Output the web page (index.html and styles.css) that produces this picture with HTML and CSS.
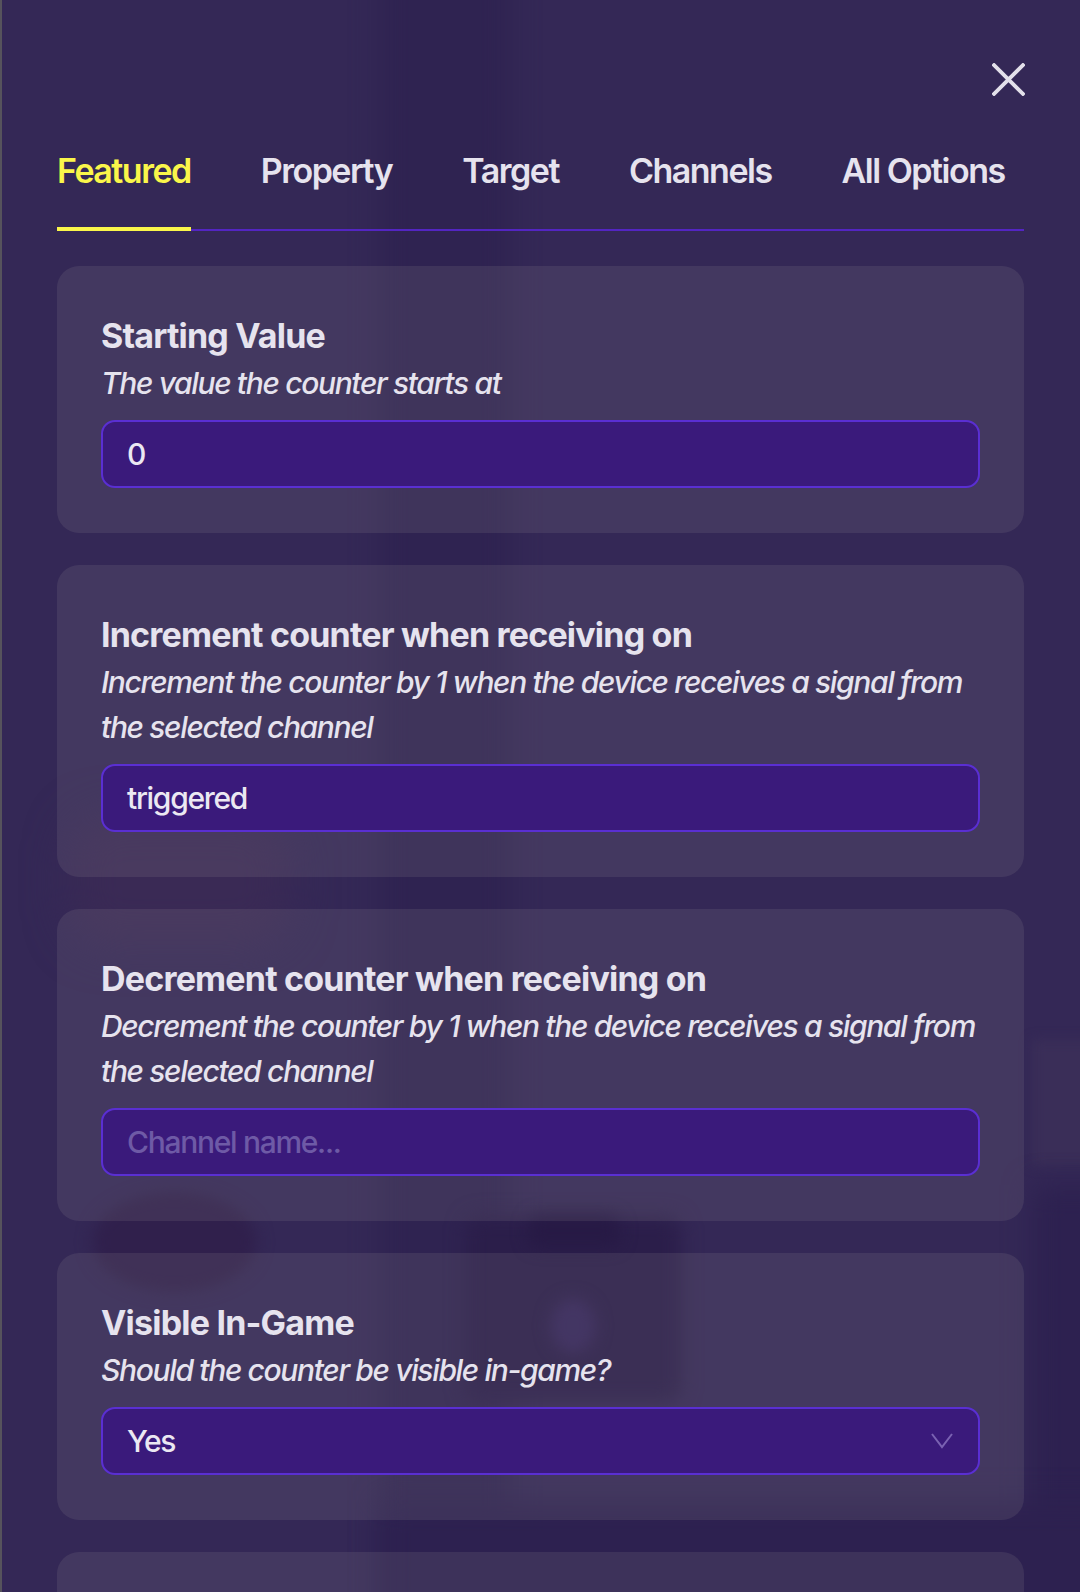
FILE: index.html
```html
<!DOCTYPE html>
<html lang="en">
<head>
<meta charset="utf-8">
<title>Counter – Options</title>
<link rel="stylesheet" href="styles.css">
</head>
<body>
<div class="backdrop" aria-hidden="true">
  <div class="blob strip"></div>
  <div class="blob pink"></div>
  <div class="blob disc"></div>
  <div class="blob box"></div>
  <div class="blob box-top"></div>
  <div class="blob box-oval"></div>
  <div class="blob right-light"></div>
  <div class="blob right-dark"></div>
  <div class="blob bottom-dark"></div>
</div>
<main class="panel">
  <header class="panel-head">
    <button class="close" aria-label="Close">
      <svg viewBox="0 0 32 32" width="33" height="33"><path d="M2 2 L30 30 M30 2 L2 30" stroke="currentColor" stroke-width="3.6" stroke-linecap="square" fill="none"/></svg>
    </button>
  </header>
  <nav class="tabs">
    <a class="tab active">Featured</a>
    <a class="tab">Property</a>
    <a class="tab">Target</a>
    <a class="tab">Channels</a>
    <a class="tab">All Options</a>
  </nav>
  <section class="options">
    <div class="card">
      <h3 class="card-title">Starting Value</h3>
      <p class="card-desc">The value the counter starts at</p>
      <div class="field"><span>0</span></div>
    </div>
    <div class="card">
      <h3 class="card-title">Increment counter when receiving on</h3>
      <p class="card-desc">Increment the counter by 1 when the device receives a signal from the selected channel</p>
      <div class="field"><span>triggered</span></div>
    </div>
    <div class="card">
      <h3 class="card-title">Decrement counter when receiving on</h3>
      <p class="card-desc">Decrement the counter by 1 when the device receives a signal from the selected channel</p>
      <div class="field placeholder"><span>Channel name...</span></div>
    </div>
    <div class="card">
      <h3 class="card-title">Visible In-Game</h3>
      <p class="card-desc">Should the counter be visible in-game?</p>
      <div class="field select"><span>Yes</span>
        <svg class="chev" viewBox="0 0 24 18" width="24" height="18"><path d="M2 2 L12 15 L22 2" stroke="currentColor" stroke-width="2" fill="none"/></svg>
      </div>
    </div>
    <div class="card"></div>
  </section>
</main>
</body>
</html>
```
FILE: styles.css
```css
html, body {
  margin: 0;
  padding: 0;
}
body {
  background: #342856;
  font-family: Inter, "Noto Sans", sans-serif;
  color: #e6e3ee;
  overflow: hidden;
  height: 1592px;
  position: relative;
}
.backdrop {
  position: absolute;
  inset: 0;
  overflow: hidden;
  z-index: 0;
}
.blob {
  position: absolute;
  filter: blur(14px);
}
.strip {
  left: 380px;
  top: -40px;
  width: 130px;
  height: 1700px;
  background: #2f2351;
}
.pink {
  left: 70px;
  top: 815px;
  width: 220px;
  height: 130px;
  border-radius: 40px;
  background: #3a2a55;
  filter: blur(22px);
}
.disc {
  left: 92px;
  top: 1192px;
  width: 165px;
  height: 100px;
  border-radius: 50%;
  background: #30204c;
  filter: blur(8px);
}
.box {
  left: 466px;
  top: 1216px;
  width: 215px;
  height: 186px;
  border-radius: 14px;
  background: #2b1e4a;
  filter: blur(10px);
}
.box-top {
  left: 528px;
  top: 1214px;
  width: 92px;
  height: 34px;
  border-radius: 12px;
  background: #271a45;
  filter: blur(8px);
}
.box-oval {
  left: 550px;
  top: 1298px;
  width: 46px;
  height: 56px;
  border-radius: 50%;
  background: #34255a;
  filter: blur(8px);
}
.right-light {
  left: 1032px;
  top: 1040px;
  width: 80px;
  height: 125px;
  background: #3a2e58;
  filter: blur(6px);
}
.right-dark {
  left: 1032px;
  top: 1185px;
  width: 80px;
  height: 450px;
  background: #2d2150;
}
.bottom-dark {
  left: 380px;
  top: 1500px;
  width: 760px;
  height: 140px;
  background: #2d2150;
}
.panel {
  position: relative;
  z-index: 1;
  border-left: 2px solid #56535c;
  padding: 63px 56px 0 55px;
}
.panel-head {
  display: flex;
  justify-content: flex-end;
  height: 33px;
}
.close {
  background: none;
  border: 0;
  padding: 0;
  margin-right: -1px;
  color: #e3e0ea;
  width: 33px;
  height: 33px;
  display: block;
}
.close svg {
  display: block;
}
.tabs {
  display: flex;
  gap: 70px;
  margin-top: 53px;
  border-bottom: 2px solid #5325c2;
}
.tab {
  position: relative;
  flex-shrink: 0;
  white-space: nowrap;
  font-size: 34px;
  font-weight: 600;
  line-height: 44px;
  padding-bottom: 36px;
  color: #e6e3ee;
  letter-spacing: -1.5px;
}
.tab.active {
  color: #faf64a;
}
.tab.active::after {
  content: "";
  position: absolute;
  left: 0;
  right: 0;
  bottom: -2px;
  height: 4px;
  background: #faf64a;
}
.options {
  display: flex;
  flex-direction: column;
  gap: 32px;
  margin-top: 35px;
}
.card {
  background: rgba(250, 250, 215, 0.08);
  border-radius: 22px;
  padding: 44px 44px 45px;
  min-height: 150px;
}
.card-title {
  margin: 0;
  font-size: 34px;
  line-height: 51px;
  font-weight: 700;
  letter-spacing: -0.8px;
}
.card-desc {
  margin: 0 0 14px;
  font-size: 30px;
  line-height: 45px;
  font-style: italic;
  font-weight: 500;
  letter-spacing: -1.35px;
}
.field {
  display: flex;
  align-items: center;
  justify-content: space-between;
  box-sizing: border-box;
  height: 68px;
  padding: 0 24px;
  background: #3a1a7b;
  border: 2px solid #5a2fd2;
  border-radius: 14px;
  font-size: 30px;
  font-weight: 500;
  color: #ebe8f2;
  letter-spacing: -1.3px;
}
.field.placeholder {
  color: #6e5aa6;
}
.chev {
  color: #7a62b2;
}
```
